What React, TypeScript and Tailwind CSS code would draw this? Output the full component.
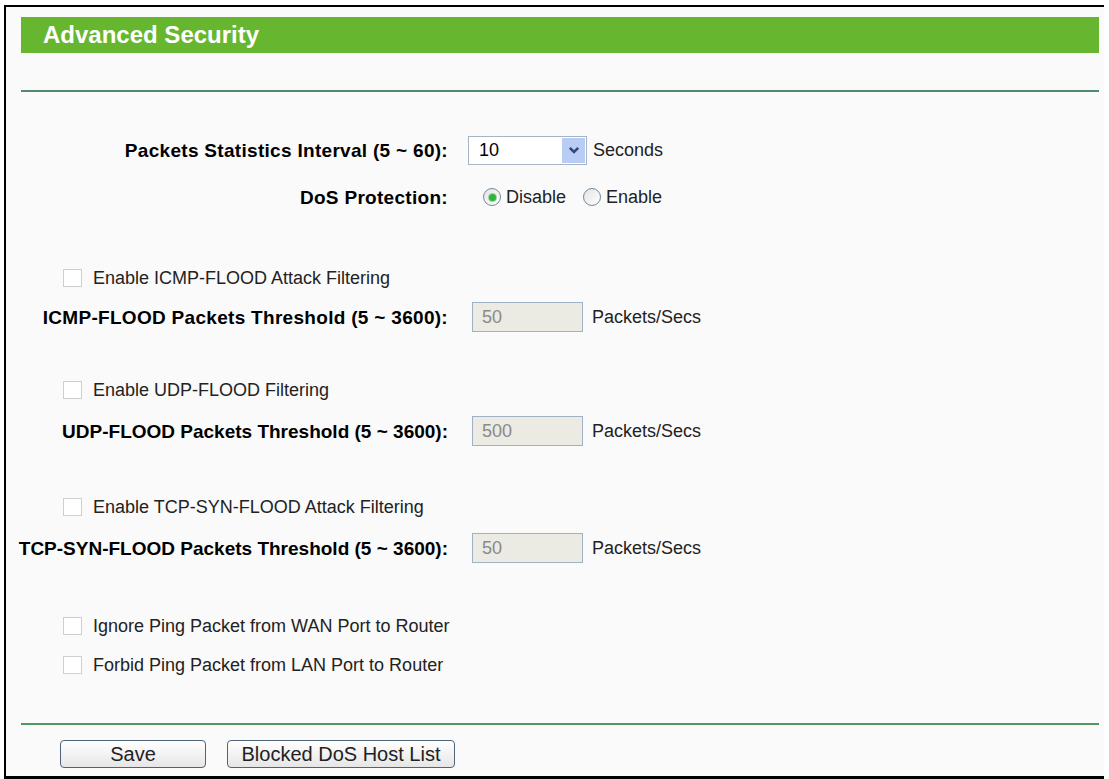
import React from "react";

const font = { fontFamily: '"Liberation Sans", Arial, sans-serif' };

function Checkbox() {
  return <span className="inline-block w-[19px] h-[18px] border border-[#cfcfcf] bg-white shrink-0" />;
}

function Radio({ checked }: { checked?: boolean }) {
  return (
    <span className="inline-flex items-center justify-center w-[18px] h-[18px] rounded-full border border-[#6f8aa0] bg-gradient-to-br from-[#e4e4e4] to-white shrink-0">
      {checked && <span className="w-[7px] h-[7px] rounded-full bg-[#2fb53b] ring-1 ring-[#9bd09f]" />}
    </span>
  );
}

function CbRow({ text, mt }: { text: string; mt: string }) {
  return (
    <div className={`flex items-center h-[24px] pl-[42px] ${mt}`}>
      <Checkbox />
      <span className="ml-[11px] text-[18px] text-[#222] leading-none">{text}</span>
    </div>
  );
}

function Label({ children, track }: { children: React.ReactNode; track?: boolean }) {
  return (
    <div className="w-[427px] shrink-0 flex justify-end">
      <span className={`font-bold text-[19px] text-black whitespace-nowrap leading-none ${track ? "tracking-[0.3px]" : ""}`}>{children}</span>
    </div>
  );
}

function ThrRow({ label, value, mt, track }: { label: string; value: string; mt: string; track?: boolean }) {
  return (
    <div className={`flex items-center h-[30px] ${mt}`}>
      <Label track={track}>{label}</Label>
      <div className="ml-[24px] w-[111px] h-[30px] border border-[#9fb1c2] bg-[#ebebe4] text-[#8a8a8a] text-[18px] flex items-center pl-[9px]">{value}</div>
      <span className="ml-[9px] text-[18px] text-[#222] leading-none">Packets/Secs</span>
    </div>
  );
}

export default function App() {
  return (
    <div className="w-[1109px] h-[779px] bg-white overflow-hidden" style={font}>
      <div className="ml-[4px] mt-[5px] w-[1100px] h-[774px] border-l-2 border-t-2 border-b-[3px] border-black bg-[#fafafa] pl-[15px] pt-[10px]">
        <div className="w-[1078px]">
          <div className="h-[36px] bg-[#66b72f] flex items-center pl-[22px]">
            <span className="text-white font-bold text-[24px] leading-none">Advanced Security</span>
          </div>
          <div className="mt-[37px] h-[2px] bg-[#4e8a6b]" />

          <div className="flex items-center h-[30px] mt-[43px]">
            <Label track>Packets Statistics Interval (5 ~ 60):</Label>
            <div className="ml-[20px] w-[119px] h-[29px] border border-[#a7b4c2] bg-white flex items-center pr-[1px]">
              <span className="flex-1 pl-[10px] text-[18px] text-black leading-none">10</span>
              <span className="w-[23px] h-[25px] bg-[#b9ccf3] flex items-center justify-center">
                <svg width="12" height="9" viewBox="0 0 12 9">
                  <path d="M1.8 1.8 L6 6 L10.2 1.8" fill="none" stroke="#33487f" strokeWidth="2.6" />
                </svg>
              </span>
            </div>
            <span className="ml-[6px] text-[18px] text-[#222] leading-none">Seconds</span>
          </div>

          <div className="flex items-center h-[24px] mt-[20px]">
            <Label track>DoS Protection:</Label>
            <div className="ml-[35px] flex items-center">
              <Radio checked />
              <span className="ml-[5px] text-[18px] text-[#222] leading-none">Disable</span>
              <span className="ml-[17px]" />
              <Radio />
              <span className="ml-[5px] text-[18px] text-[#222] leading-none">Enable</span>
            </div>
          </div>

          <CbRow text="Enable ICMP-FLOOD Attack Filtering" mt="mt-[57px]" />
          <ThrRow label="ICMP-FLOOD Packets Threshold (5 ~ 3600):" value="50" mt="mt-[12px]" track />

          <CbRow text="Enable UDP-FLOOD Filtering" mt="mt-[46px]" />
          <ThrRow label="UDP-FLOOD Packets Threshold (5 ~ 3600):" value="500" mt="mt-[14px]" />

          <CbRow text="Enable TCP-SYN-FLOOD Attack Filtering" mt="mt-[49px]" />
          <ThrRow label="TCP-SYN-FLOOD Packets Threshold (5 ~ 3600):" value="50" mt="mt-[14px]" />

          <CbRow text="Ignore Ping Packet from WAN Port to Router" mt="mt-[51px]" />
          <CbRow text="Forbid Ping Packet from LAN Port to Router" mt="mt-[15px]" />

          <div className="mt-[46px] h-[2px] bg-[#4e9a62]" />

          <div className="flex items-center mt-[15px] pl-[39px] gap-[21px]">
            <button className="w-[146px] h-[28px] rounded-[4px] border border-[#4f6478] bg-gradient-to-b from-white to-[#e6e6e6] text-[20px] leading-none text-[#222]">Save</button>
            <button className="w-[228px] h-[28px] rounded-[4px] border border-[#4f6478] bg-gradient-to-b from-white to-[#e6e6e6] text-[20px] leading-none text-[#222]">Blocked DoS Host List</button>
          </div>
        </div>
      </div>
    </div>
  );
}
